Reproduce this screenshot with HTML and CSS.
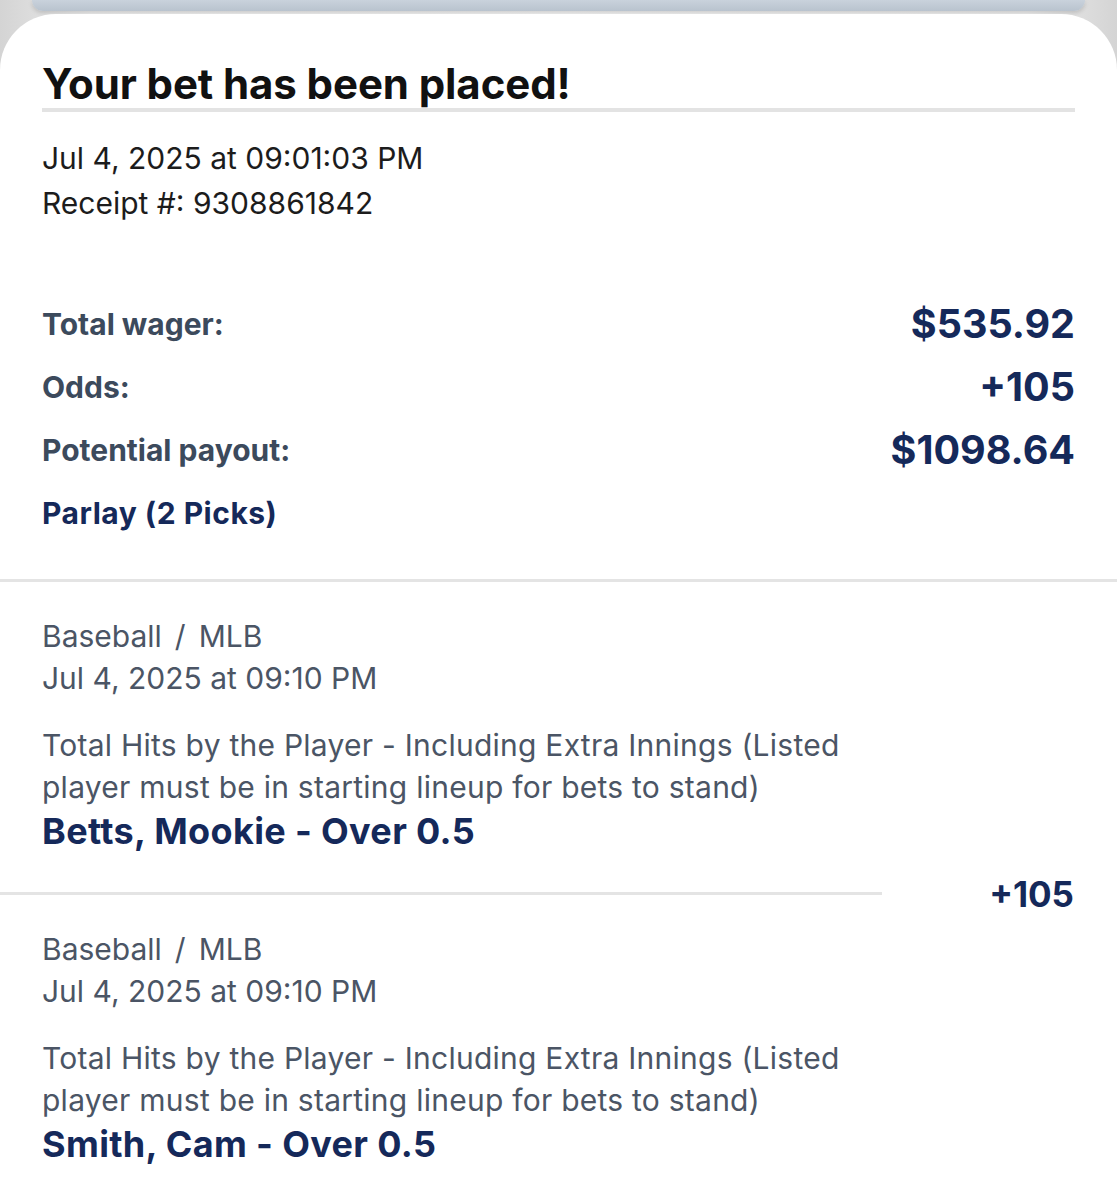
FILE: index.html
```html
<!DOCTYPE html>
<html>
<head>
<meta charset="utf-8">
<link rel="stylesheet" href="styles.css">
</head>
<body>
<div class="topbar"></div>
<div class="card">
  <div class="head">
    <h1 class="title">Your bet has been placed!</h1>
    <div class="meta">
      <div>Jul 4, 2025 at 09:01:03 PM</div>
      <div>Receipt #: 9308861842</div>
    </div>
  </div>
  <div class="summary">
    <div class="row"><span class="label">Total wager:</span><span class="value">$535.92</span></div>
    <div class="row"><span class="label">Odds:</span><span class="value">+105</span></div>
    <div class="row"><span class="label">Potential payout:</span><span class="value">$1098.64</span></div>
    <div class="parlay">Parlay (2 Picks)</div>
  </div>
  <div class="sep"></div>
  <div class="legs">
    <div class="legs-list">
      <div class="leg">
        <div class="sport">Baseball<span class="slash">/</span>MLB</div>
        <div class="when">Jul 4, 2025 at 09:10 PM</div>
        <div class="market">Total Hits by the Player - Including Extra Innings (Listed player must be in starting lineup for bets to stand)</div>
        <div class="pick">Betts, Mookie - Over 0.5</div>
      </div>
      <div class="leg-sep"></div>
      <div class="leg">
        <div class="sport">Baseball<span class="slash">/</span>MLB</div>
        <div class="when">Jul 4, 2025 at 09:10 PM</div>
        <div class="market">Total Hits by the Player - Including Extra Innings (Listed player must be in starting lineup for bets to stand)</div>
        <div class="pick">Smith, Cam - Over 0.5</div>
      </div>
    </div>
    <div class="legs-odds">+105</div>
  </div>
</div>
</body>
</html>
```
FILE: styles.css
```css
* { box-sizing: border-box; }
html, body { margin: 0; padding: 0; }
body {
  background: linear-gradient(90deg, #d4d4d4 0%, #ececec 8%, #f2f2f2 50%, #ececec 92%, #d4d4d4 100%);
  font-family: Inter, "DejaVu Sans", sans-serif;
  width: 1117px;
  height: 1200px;
  overflow: hidden;
}
.topbar {
  margin: 0 32px 0 32px;
  height: 11px;
  background: linear-gradient(180deg, #c9d2dc, #b9c3ce);
  border-radius: 0 0 12px 12px;
  box-shadow: 0 2px 4px rgba(0,0,0,0.15);
}
.card {
  margin-top: 3px;
  background: #fff;
  border-radius: 56px 56px 0 0;
  height: 1200px;
  padding-top: 48px;
}
.head { padding: 0 42px; }
.title {
  margin: 0;
  font-size: 42px;
  line-height: 44px;
  font-weight: 700;
  color: #111;
  letter-spacing: -0.1px;
  padding-bottom: 2px;
  border-bottom: 4px solid #e3e3e3;
}
.meta {
  margin-top: 24px;
  font-size: 30px;
  line-height: 45px;
  color: #1c1c1c;
}
.summary {
  padding: 66px 42px 35px;
}
.row {
  display: flex;
  justify-content: space-between;
  align-items: center;
  height: 63px;
}
.label {
  font-size: 30px;
  font-weight: 700;
  color: #3c4a5c;
}
.value {
  font-size: 39.5px;
  font-weight: 700;
  color: #15295a;
}
.parlay {
  height: 63px;
  display: flex;
  align-items: center;
  font-size: 30px;
  letter-spacing: 0.5px;
  font-weight: 700;
  color: #15295a;
}
.sep { height: 3px; background: #e4e4e4; }
.legs {
  display: flex;
}
.legs-list { width: 882px; }
.leg { padding: 33px 0 38px 42px; }
.sport, .when {
  font-size: 30px;
  line-height: 42px;
  color: #4b5565;
}
.slash { margin: 0 13px; }
.market {
  margin-top: 25px;
  font-size: 30px;
  line-height: 42px;
  letter-spacing: 0.25px;
  color: #4b5565;
}
.pick {
  font-size: 36px;
  line-height: 46px;
  letter-spacing: 0.35px;
  font-weight: 700;
  color: #15295a;
}
.leg-sep { height: 3px; background: #e4e4e4; }
.legs-odds {
  flex: 1;
  display: flex;
  justify-content: flex-end;
  align-items: center;
  padding-right: 43px;
  font-size: 35px;
  font-weight: 700;
  color: #15295a;
}
```
